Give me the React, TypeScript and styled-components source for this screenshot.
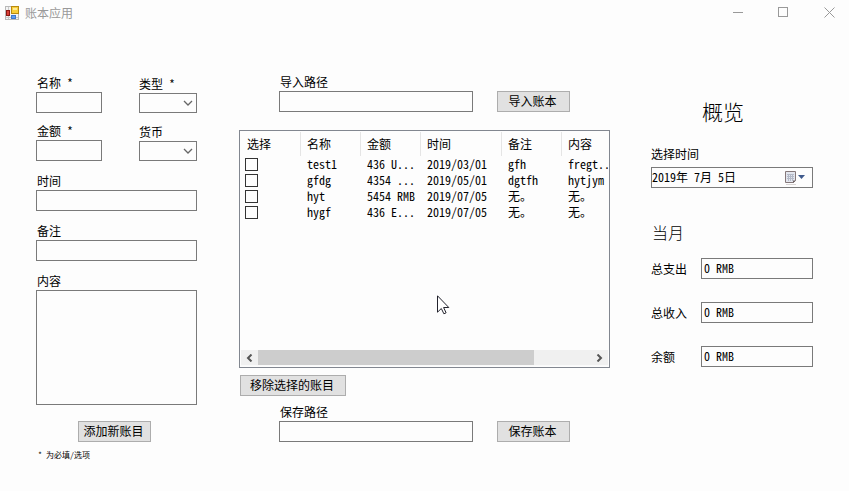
import React from "react";
import styled, { createGlobalStyle } from "styled-components";

const GlobalStyle = createGlobalStyle`
  * { box-sizing: border-box; }
  body {
    margin: 0;
    background: #fdfdfd;
    color: #000;
    font: 12px/18px "Noto Sans Mono CJK SC", "Noto Sans CJK SC", "Liberation Mono", monospace;
  }
  button, input, select, textarea { font: inherit; color: inherit; border-radius: 0; margin: 0; }
`;

const Window = styled.div`
  min-height: 100vh;
  overflow: hidden;
`;

const TitleBar = styled.header`
  display: flex;
  align-items: center;
  height: 25px;
  padding: 0 14px 0 5px;
  color: #999;
`;

const AppTitle = styled.h1`
  flex: 1;
  margin: 0 0 0 6px;
  font: 400 12px/18px "Noto Sans CJK SC", sans-serif;
`;

const WindowControls = styled.div`
  display: flex;
  gap: 35px;
`;

const WindowButton = styled.button`
  display: flex;
  width: 11px;
  height: 11px;
  padding: 0;
  border: 0;
  background: none;
`;

const Columns = styled.main`
  display: flex;
  align-items: flex-start;
  padding: 48px 36px 20px;
`;

const EntryPanel = styled.form`
  display: flex;
  flex-direction: column;
  gap: 11px;
  flex: 161 1 0;
  min-width: 0;
  padding-top: 1px;
`;

const LedgerPanel = styled.section`
  flex: 371 1 0;
  min-width: 0;
  margin-left: 42px;
`;

const OverviewPanel = styled.section`
  flex: 162 1 0;
  min-width: 0;
  margin-left: 41px;
  padding-top: 24px;
`;

const PairGrid = styled.div`
  display: grid;
  grid-template-columns: 66fr 58fr;
  gap: 9px 37px;
  align-items: end;
`;

const Field = styled.div`
  display: flex;
  flex-direction: column;
  min-width: 0;
`;

const Label = styled.label<{ $flush?: boolean }>`
  display: block;
  padding-left: ${(p) => (p.$flush ? 0 : 1)}px;
  line-height: 18px;
  white-space: pre;
`;

const TextBox = styled.input`
  display: block;
  width: 100%;
  min-width: 0;
  height: 21px;
  padding: 0 2px 3px;
  border: 1px solid #7a7a7a;
  background: #fdfdfd;
  outline: none;
`;

const TextArea = styled.textarea`
  display: block;
  width: 100%;
  height: 115px;
  border: 1px solid #7a7a7a;
  background: #fdfdfd;
  resize: none;
  outline: none;
`;

const SelectWrap = styled.div`
  position: relative;
`;

const Select = styled.select`
  display: block;
  width: 100%;
  height: 20px;
  padding: 0 18px 0 3px;
  border: 1px solid #7a7a7a;
  background: #fdfdfd;
  appearance: none;
`;

const SelectArrow = styled.svg`
  position: absolute;
  right: 4px;
  top: 7px;
  pointer-events: none;
`;

const PushButton = styled.button<{ $width: number }>`
  flex: none;
  width: ${(p) => p.$width}px;
  height: 21px;
  padding: 0 2px 2px 0;
  border: 1px solid #adadad;
  background: #e1e1e1;
  line-height: 17px;
  white-space: nowrap;
`;

const SubmitArea = styled.div`
  display: flex;
  flex-direction: column;
  gap: 5px;
  padding: 5px 4px 0 0;

  button { align-self: center; }
`;

const Footnote = styled.small`
  padding-left: 2px;
  font-size: 8px;
  line-height: 16px;
`;

const PathRow = styled.div`
  display: flex;
  align-items: flex-end;
  gap: 24px;
  padding: 0 40px;
`;

const PathField = styled(Field)`
  flex: 1;
`;

const ListFrame = styled.div`
  position: relative;
  display: flex;
  flex-direction: column;
  min-height: 238px;
  margin: 18px 0 7px;
  padding: 1px;
  border: 1px solid #828790;
  overflow: hidden;
`;

const ListBody = styled.div`
  flex: 1;
  overflow: hidden;
`;

const Ledger = styled.table`
  width: 379px;
  table-layout: fixed;
  border-collapse: separate;
  border-spacing: 0;
`;

const HeadCell = styled.th<{ $width: number }>`
  width: ${(p) => p.$width}px;
  height: 24px;
  padding: 0 0 0 6px;
  border-right: 1px solid #e5e5e5;
  font-weight: 400;
  text-align: left;
`;

const Cell = styled.td`
  height: 16px;
  padding: 0 0 0 6px;
  line-height: 16px;
  white-space: pre;

  &:first-child { padding-left: 4px; }
`;

const Check = styled.input`
  display: block;
  width: 13px;
  height: 13px;
  margin: 0;
  border: 1px solid #333;
  background: #fdfdfd;
  appearance: none;

  &:checked { background: #333; }
`;

const ScrollBar = styled.div`
  display: flex;
  height: 16px;
  background: #f0f0f0;
  border-bottom: 1px solid #fafafa;
`;

const ScrollButton = styled.button`
  display: flex;
  align-items: center;
  justify-content: center;
  width: 17px;
  padding: 0;
  border: 0;
  background: none;
`;

const ScrollTrack = styled.div`
  flex: 1;
`;

const ScrollThumb = styled.div`
  width: 83%;
  height: 15px;
  background: #cdcdcd;
`;

const Pointer = styled.svg`
  position: absolute;
  left: 197px;
  top: 164px;
  pointer-events: none;
`;

const SaveArea = styled.div`
  padding-top: 7px;
`;

const RemoveRow = styled.div`
  display: flex;
  padding-left: 1px;
`;

const OverviewTitle = styled.h2`
  margin: 0 0 20px;
  padding-right: 18px;
  font: 300 21px/28px "Noto Sans CJK SC", sans-serif;
  text-align: center;
`;

const MonthTitle = styled.h3`
  margin: 32px 0 14px;
  padding-left: 1px;
  font: 300 16px/24px "Noto Sans CJK SC", sans-serif;
`;

const DateBox = styled.div`
  display: flex;
  align-items: center;
  height: 21px;
  margin-top: 4px;
  border: 1px solid #7a7a7a;
`;

const DateInput = styled.input`
  flex: 1;
  min-width: 0;
  height: 19px;
  padding: 0 0 2px;
  border: 0;
  background: none;
  outline: none;
`;

const DateButton = styled.button`
  display: flex;
  width: 27px;
  padding: 0;
  border: 0;
  background: none;
`;

const Totals = styled.div`
  display: flex;
  flex-direction: column;
  gap: 23px;
`;

const TotalRow = styled.div`
  display: grid;
  grid-template-columns: 50px 1fr;
  align-items: center;
`;

const columns = [
  { title: "选择", width: 60 },
  { title: "名称", width: 60 },
  { title: "金额", width: 60 },
  { title: "时间", width: 81 },
  { title: "备注", width: 60 },
  { title: "内容", width: 58 },
];

const rows = [
  ["test1", "436 U...", "2019/03/01", "gfh", "fregt.."],
  ["gfdg", "4354 ...", "2019/05/01", "dgtfh", "hytjym"],
  ["hyt", "5454 RMB", "2019/07/05", "无。", "无。"],
  ["hygf", "436 E...", "2019/07/05", "无。", "无。"],
];

const totals = [
  { id: "expense", label: "总支出" },
  { id: "income", label: "总收入" },
  { id: "balance", label: "余额" },
];

function AppIcon() {
  return (
    <svg width="14" height="14" viewBox="0 0 14 14" aria-hidden="true">
      <rect x="0.5" y="0.5" width="13" height="13" fill="#f4f4f4" stroke="#b9b9b9" />
      <path d="M3.500 1v12M1 11.500h12" stroke="#c9c9c9" />
      <rect x="1.500" y="4.500" width="3" height="5" fill="#d94038" stroke="#8d1712" />
      <rect x="6.500" y="0.500" width="7" height="7" fill="#f9cf3a" stroke="#b88a10" />
      <path d="M8 2h4v2H8z" fill="#ffeb96" />
      <rect x="6.500" y="9.500" width="4" height="3" fill="#5b9cf4" stroke="#3f78cf" />
    </svg>
  );
}

function TextField({ id, label }: { id: string; label: string }) {
  return (
    <Field>
      <Label htmlFor={id}>{label}</Label>
      <TextBox id={id} />
    </Field>
  );
}

function SelectField({ id, label }: { id: string; label: string }) {
  return (
    <Field>
      <Label htmlFor={id} $flush>{label}</Label>
      <SelectWrap>
        <Select id={id} />
        <SelectArrow width="10" height="7" viewBox="0 0 10 7" fill="none">
          <path d="M1 1l4 4 4-4" stroke="#666" strokeWidth="1.3" />
        </SelectArrow>
      </SelectWrap>
    </Field>
  );
}

function PathEntry({ id, label, action }: { id: string; label: string; action: string }) {
  return (
    <PathRow>
      <PathField>
        <Label htmlFor={id}>{label}</Label>
        <TextBox id={id} />
      </PathField>
      <PushButton type="button" $width={73}>{action}</PushButton>
    </PathRow>
  );
}

function LedgerList() {
  return (
    <ListFrame>
      <ListBody>
        <Ledger>
          <thead>
            <tr>
              {columns.map((c) => (
                <HeadCell key={c.title} $width={c.width} scope="col">{c.title}</HeadCell>
              ))}
            </tr>
          </thead>
          <tbody>
            {rows.map((row) => (
              <tr key={row[0]}>
                <Cell><Check type="checkbox" aria-label={row[0]} /></Cell>
                {row.map((value, i) => <Cell key={i}>{value}</Cell>)}
              </tr>
            ))}
          </tbody>
        </Ledger>
      </ListBody>
      <ScrollBar>
        <ScrollButton type="button" aria-label="向左滚动">
          <svg width="7" height="8" viewBox="0 0 7 8" fill="none">
            <path d="M5.500 0.500L2 4l3.500 3.500" stroke="#555" strokeWidth="2" />
          </svg>
        </ScrollButton>
        <ScrollTrack><ScrollThumb /></ScrollTrack>
        <ScrollButton type="button" aria-label="向右滚动">
          <svg width="7" height="8" viewBox="0 0 7 8" fill="none">
            <path d="M1.500 0.500L5 4L1.500 7.500" stroke="#555" strokeWidth="2" />
          </svg>
        </ScrollButton>
      </ScrollBar>
      <Pointer width="13" height="20" viewBox="0 0 13 20" aria-hidden="true">
        <path d="M0.500 0.800v16.400l3.800-3.700 2.600 5.300 2.200-1-2.500-5.300h5.200z" fill="#fff" stroke="#23232d" />
      </Pointer>
    </ListFrame>
  );
}

export default function App() {
  return (
    <Window>
      <GlobalStyle />
      <TitleBar>
        <AppIcon />
        <AppTitle>账本应用</AppTitle>
        <WindowControls>
          <WindowButton aria-label="最小化">
            <svg width="11" height="11"><path d="M1 5.500h10" stroke="#999" /></svg>
          </WindowButton>
          <WindowButton aria-label="最大化">
            <svg width="11" height="11"><rect x="0.500" y="0.500" width="9" height="9" fill="none" stroke="#999" /></svg>
          </WindowButton>
          <WindowButton aria-label="关闭">
            <svg width="11" height="11"><path d="M0.500 0.500l10 10M10.500 0.500l-10 10" stroke="#999" /></svg>
          </WindowButton>
        </WindowControls>
      </TitleBar>
      <Columns>
        <EntryPanel>
          <PairGrid>
            <TextField id="name" label="名称 *" />
            <SelectField id="kind" label="类型 *" />
            <TextField id="amount" label="金额 *" />
            <SelectField id="currency" label="货币" />
          </PairGrid>
          <TextField id="time" label="时间" />
          <TextField id="remark" label="备注" />
          <Field>
            <Label htmlFor="content">内容</Label>
            <TextArea id="content" />
          </Field>
          <SubmitArea>
            <PushButton type="button" $width={73}>添加新账目</PushButton>
            <Footnote>* 为必填/选项</Footnote>
          </SubmitArea>
        </EntryPanel>
        <LedgerPanel>
          <PathEntry id="import-path" label="导入路径" action="导入账本" />
          <LedgerList />
          <RemoveRow>
            <PushButton type="button" $width={106}>移除选择的账目</PushButton>
          </RemoveRow>
          <SaveArea>
            <PathEntry id="save-path" label="保存路径" action="保存账本" />
          </SaveArea>
        </LedgerPanel>
        <OverviewPanel>
          <OverviewTitle>概览</OverviewTitle>
          <Label htmlFor="date" $flush>选择时间</Label>
          <DateBox>
            <DateInput id="date" defaultValue="2019年 7月 5日" />
            <DateButton type="button" aria-label="打开日历">
              <svg width="22" height="14" viewBox="0 0 22 14">
                <path d="M1 13.500h10" stroke="#d8d4d4" />
                <path d="M0.500 0.500h10v9l-2 2h-8z" fill="#e3e6ee" stroke="#85787a" />
                <path d="M3.500 3v7M5.500 3v7M7.500 3v7M2 3.500h7M2 5.500h7M2 7.500h7" stroke="#b4bac8" />
                <path d="M8 12V9.500H11z" fill="#6d6264" />
                <path d="M13 4h7l-3.500 4z" fill="#3f5a8c" />
              </svg>
            </DateButton>
          </DateBox>
          <MonthTitle>当月</MonthTitle>
          <Totals>
            {totals.map((t) => (
              <TotalRow key={t.id}>
                <Label htmlFor={t.id} $flush>{t.label}</Label>
                <TextBox id={t.id} defaultValue="0 RMB" readOnly />
              </TotalRow>
            ))}
          </Totals>
        </OverviewPanel>
      </Columns>
    </Window>
  );
}
